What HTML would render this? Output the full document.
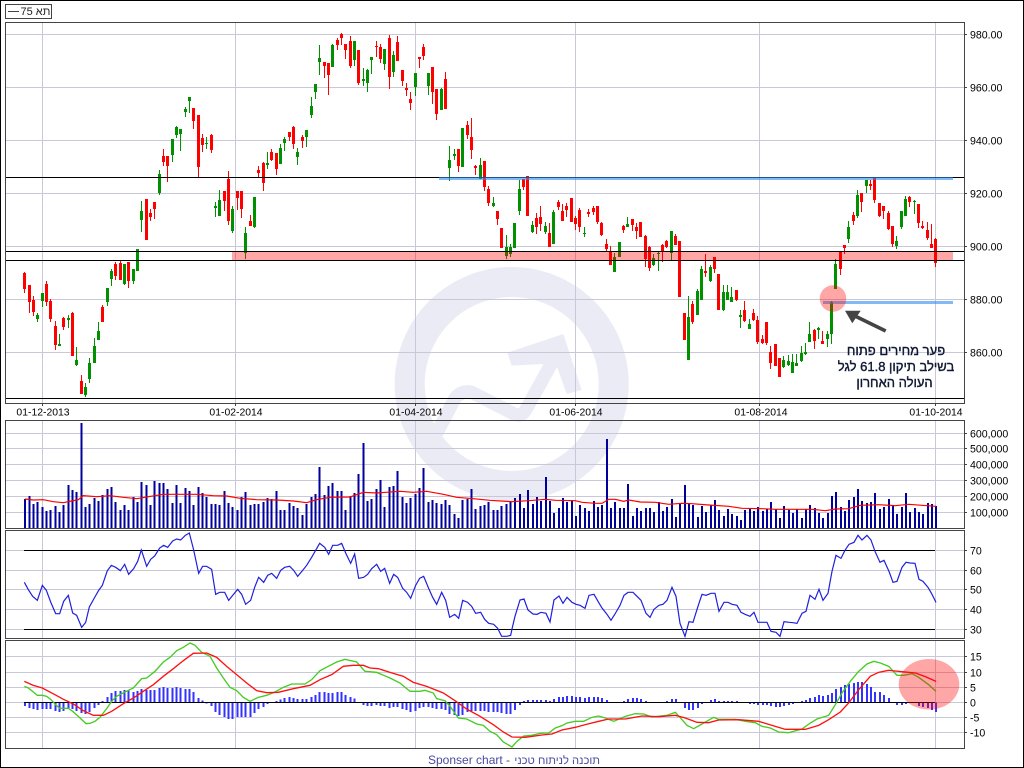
<!DOCTYPE html>
<html><head><meta charset="utf-8"><title>Chart</title>
<style>html,body{margin:0;padding:0;background:#fff;width:1024px;height:768px;overflow:hidden}svg{display:block}text{font-family:"Liberation Sans","DejaVu Sans",sans-serif}</style></head>
<body>
<svg xmlns="http://www.w3.org/2000/svg" width="1024" height="768" viewBox="0 0 1024 768">
<rect width="1024" height="768" fill="#fff"/>
<!-- watermark -->
<circle cx="511.7" cy="384" r="102" fill="none" stroke="#ebebf5" stroke-width="30"/>
<g transform="translate(390,330) scale(.33333)">
<path d="M140 310L195 205Q215 180 245 187L375 253Q395 262 410 235L490 90" fill="none" stroke="#ebebf5" stroke-width="40"/>
<path d="M352 68L520 12L575 180L530 192L497 100L365 107Z" fill="#ebebf5"/>
</g>
<!-- grid -->
<g stroke="#c8c8d8" stroke-width="1" shape-rendering="crispEdges" fill="none">
<path d="M5 34.5H964M5 87.5H964M5 140.5H964M5 193.5H964M5 246.5H964M5 299.5H964M5 352.5H964"/>
<path d="M42.5 22V403M235.5 22V403M415.5 22V403M575.5 22V403M759.5 22V403M935.5 22V403"/>
<path d="M5 433.5H964M5 448.5H964M5 464.5H964M5 480.5H964M5 496.5H964M5 512.5H964"/>
<path d="M42.5 420V528M235.5 420V528M415.5 420V528M575.5 420V528M759.5 420V528M935.5 420V528"/>
<path d="M5 550.5H964M5 570.5H964M5 589.5H964M5 609.5H964M5 629.5H964"/>
<path d="M42.5 530V638M235.5 530V638M415.5 530V638M575.5 530V638M759.5 530V638M935.5 530V638"/>
<path d="M5 656.5H964M5 672.5H964M5 687.5H964M5 702.5H964M5 717.5H964M5 732.5H964"/>
<path d="M42.5 640V748M235.5 640V748M415.5 640V748M575.5 640V748M759.5 640V748M935.5 640V748"/>
</g>
<!-- green candles -->
<g fill="none" stroke="#009000" shape-rendering="crispEdges">
<path stroke-width="1" d="M37.5 313V322M42.5 293V307M59.5 334V346M68.5 315V328M76.5 347V366M85.5 383V397M89.5 358V383M94.5 338V363M98.5 322V340M107.5 288V306M111.5 269V286M124.5 264V285M133.5 269V284M137.5 249V271M141.5 201V232M159.5 170V195M172.5 139V162M176.5 126V138M180.5 129V151M185.5 107V117M189.5 97V113M206.5 137V149M215.5 202V217M219.5 190V216M232.5 206V233M245.5 227V259M254.5 197V228M267.5 152V169M280.5 144V164M284.5 137V151M297.5 148V165M306.5 130V147M311.5 97V118M315.5 84V99M319.5 45V75M332.5 44V67M354.5 41V66M363.5 68V86M367.5 69V92M371.5 57V74M384.5 49V70M393.5 51V77M415.5 73V96M428.5 73V95M441.5 88V110M449.5 146V181M454.5 149V160M462.5 128V167M480.5 158V179M493.5 197V207M506.5 235V259M510.5 244V257M514.5 223V248M519.5 180V215M532.5 221V233M545.5 222V234M553.5 210V244M584.5 227V237M614.5 253V272M619.5 242V257M627.5 217V227M653.5 254V266M658.5 251V271M671.5 231V260M688.5 296V360M697.5 289V315M701.5 266V300M710.5 265V282M723.5 285V311M727.5 285V300M731.5 287V302M740.5 310V328M749.5 319V329M783.5 356V368M788.5 355V366M792.5 354V373M796.5 354V366M801.5 346V362M805.5 343V355M809.5 322V342M818.5 327V339M827.5 331V347M831.5 301V344M835.5 259V289M848.5 221V243M857.5 190V218M866.5 180V193M896.5 236V249M901.5 211V229M905.5 196V216M914.5 200V214"/>
<path stroke-width="3" d="M37.5 315V319M42.5 293V301M59.5 344V346M68.5 318V320M76.5 360V365M85.5 387V395M89.5 363V379M94.5 346V363M98.5 331V340M107.5 288V302M111.5 271V279M124.5 264V284M133.5 269V281M137.5 249V271M141.5 211V220M159.5 174V193M172.5 139V155M176.5 127V135M180.5 129V134M185.5 109V112M189.5 97V101M206.5 143V144M215.5 206V208M219.5 200V216M232.5 209V231M245.5 233V253M254.5 197V227M267.5 163V165M280.5 148V164M284.5 139V143M297.5 152V157M306.5 130V137M311.5 106V115M315.5 84V92M319.5 58V62M332.5 45V67M354.5 41V60M363.5 79V81M367.5 70V83M371.5 57V60M384.5 49V64M393.5 55V72M415.5 73V87M428.5 73V86M441.5 89V110M449.5 160V168M454.5 154V156M462.5 128V167M480.5 165V179M493.5 203V206M506.5 247V256M510.5 247V254M514.5 223V248M519.5 189V211M532.5 225V232M545.5 226V232M553.5 212V244M584.5 233V234M614.5 257V272M619.5 242V257M627.5 224V227M653.5 258V265M658.5 253V254M671.5 231V253M688.5 317V360M697.5 291V315M701.5 269V300M710.5 267V281M723.5 292V310M727.5 292V300M731.5 297V302M740.5 315V317M749.5 324V329M783.5 360V367M788.5 361V365M792.5 362V373M796.5 363V366M801.5 353V361M805.5 352V354M809.5 334V342M818.5 328V330M827.5 334V339M831.5 302V334M835.5 264V289M848.5 227V239M857.5 195V216M866.5 180V186M896.5 241V246M901.5 211V227M905.5 199V216M914.5 201V202"/>
</g>
<!-- red candles -->
<g fill="none" stroke="#ff0000" shape-rendering="crispEdges">
<path stroke-width="1" d="M24.5 272V293M29.5 285V313M33.5 296V316M46.5 281V306M50.5 299V322M55.5 321V350M63.5 317V330M72.5 312V356M81.5 375V394M102.5 305V322M115.5 262V280M120.5 261V280M128.5 262V288M146.5 199V240M150.5 209V221M154.5 202V219M163.5 149V166M167.5 156V182M193.5 108V129M198.5 115V177M202.5 134V152M211.5 134V153M224.5 191V211M228.5 171V225M237.5 191V210M241.5 191V218M250.5 215V226M258.5 166V177M263.5 162V191M271.5 149V161M276.5 153V175M289.5 132V141M293.5 126V149M302.5 135V148M324.5 62V78M328.5 63V95M337.5 38V50M341.5 33V45M345.5 44V59M350.5 36V68M358.5 50V85M376.5 41V57M380.5 44V63M389.5 35V89M397.5 36V61M402.5 70V86M406.5 83V96M410.5 92V110M419.5 57V68M423.5 44V60M432.5 67V104M436.5 89V120M445.5 72V109M458.5 149V172M467.5 121V139M471.5 118V159M475.5 165V175M484.5 161V191M488.5 186V206M497.5 211V225M501.5 228V248M523.5 179V190M527.5 176V216M536.5 213V234M540.5 206V231M549.5 223V247M558.5 200V210M562.5 204V221M566.5 203V217M571.5 198V222M575.5 216V230M579.5 208V232M588.5 209V217M593.5 206V215M597.5 206V224M601.5 222V236M606.5 239V251M610.5 246V265M623.5 225V233M632.5 219V231M636.5 223V239M640.5 222V237M645.5 235V267M649.5 246V271M662.5 244V262M666.5 240V248M675.5 234V245M679.5 241V297M684.5 313V340M692.5 301V324M705.5 254V277M714.5 257V273M718.5 274V310M736.5 290V301M744.5 301V322M753.5 309V321M757.5 316V344M762.5 335V344M766.5 322V345M770.5 346V369M775.5 344V366M779.5 358V377M814.5 329V349M822.5 331V344M840.5 251V275M844.5 245V254M853.5 212V225M861.5 193V212M870.5 180V190M874.5 178V203M879.5 203V217M883.5 206V219M888.5 211V230M892.5 226V247M909.5 196V207M918.5 204V228M922.5 221V229M927.5 222V240M931.5 224V248M935.5 238V267"/>
<path stroke-width="3" d="M24.5 273V289M29.5 285V302M33.5 300V312M46.5 284V302M50.5 301V319M55.5 326V345M63.5 318V327M72.5 313V356M81.5 381V394M102.5 307V322M115.5 264V276M120.5 263V280M128.5 262V281M146.5 199V240M150.5 213V217M154.5 202V209M163.5 156V162M167.5 156V166M193.5 108V121M198.5 115V167M202.5 138V145M211.5 135V150M224.5 191V201M228.5 179V221M237.5 191V198M241.5 191V209M250.5 221V226M258.5 170V173M263.5 163V183M271.5 152V160M276.5 153V169M289.5 132V137M293.5 127V144M302.5 137V141M324.5 62V66M328.5 63V75M337.5 40V45M341.5 34V38M345.5 44V50M350.5 41V66M358.5 50V83M376.5 46V47M380.5 47V59M389.5 38V77M397.5 42V61M402.5 70V81M406.5 88V90M410.5 99V103M419.5 57V59M423.5 47V56M432.5 67V92M436.5 89V114M445.5 79V109M458.5 149V166M467.5 125V135M471.5 137V150M475.5 166V168M484.5 161V187M488.5 189V203M497.5 211V219M501.5 228V248M523.5 179V187M527.5 176V216M536.5 218V227M540.5 217V224M549.5 233V247M558.5 202V207M562.5 211V221M566.5 206V210M571.5 198V222M575.5 218V224M579.5 210V227M588.5 212V214M593.5 208V212M597.5 206V222M601.5 223V235M606.5 244V249M610.5 251V265M623.5 226V230M632.5 219V225M636.5 227V231M640.5 222V237M645.5 236V259M649.5 247V268M662.5 245V252M666.5 241V247M675.5 236V245M679.5 241V297M684.5 313V340M692.5 304V322M705.5 271V273M714.5 257V269M718.5 274V310M736.5 290V300M744.5 310V321M753.5 313V320M757.5 320V342M762.5 339V343M766.5 322V343M770.5 352V363M775.5 344V366M779.5 358V377M814.5 330V341M822.5 341V344M840.5 252V269M844.5 245V248M853.5 215V221M861.5 193V202M870.5 184V186M874.5 178V200M879.5 203V216M883.5 206V211M888.5 213V229M892.5 226V244M909.5 197V202M918.5 204V223M922.5 226V228M927.5 230V238M931.5 244V248M935.5 239V263"/>
</g>
<!-- black lines main -->
<g stroke="#000" shape-rendering="crispEdges" fill="none">
<path d="M5 177.5H964M5 251.5H964M5 260.5H964M5 398.5H964"/>
</g>
<!-- band + blue -->
<rect x="232" y="252" width="721" height="8" fill="#ff0000" fill-opacity=".35" shape-rendering="crispEdges"/>
<rect x="439" y="177" width="514" height="3" fill="#2e8cf0" fill-opacity=".6" shape-rendering="crispEdges"/>
<rect x="823" y="301" width="130" height="3" fill="#2e8cf0" fill-opacity=".6" shape-rendering="crispEdges"/>
<circle cx="833" cy="298.5" r="13.3" fill="#ff0000" fill-opacity=".35"/>
<path d="M845 310.7L860.7 310.7L852.3 323.3Z" fill="#444"/>
<path d="M855 316L885.7 331" stroke="#444" stroke-width="3.6" fill="none"/>
<g font-size="13" fill="#14142a" text-anchor="middle" stroke="#102040" stroke-width=".4">
<text x="896" y="355">פער מחירים פתוח</text>
<text x="896" y="371">בשילב תיקון 61.8 לגל</text>
<text x="894.5" y="387">העולה האחרון</text>
</g>
<!-- volume -->
<g transform="translate(0,415) scale(.33333)" fill="none" stroke="#00009c" stroke-width="6" shape-rendering="crispEdges">
<path d="M75 340V252M89 340V243M101 340V267M113 340V261M128 340V276M140 340V288M152 340V285M167 340V273M179 340V291M191 340V270M206 340V210M218 340V225M230 340V231M245 340V24M257 340V276M269 340V267M284 340V249M296 340V258M308 340V240M323 340V222M335 340V216M347 340V261M362 340V285M374 340V270M386 340V285M401 340V246M413 340V261M425 340V201M440 340V210M452 340V270M464 340V198M479 340V204M491 340V204M503 340V222M518 340V264M530 340V210M542 340V264M557 340V219M569 340V228M581 340V270M596 340V216M608 340V234M620 340V246M635 340V267M647 340V267M659 340V270M674 340V228M686 340V264M698 340V276M713 340V285M725 340V246M737 340V231M752 340V270M764 340V267M776 340V267M791 340V261M803 340V249M815 340V252M830 340V228M842 340V285M854 340V285M869 340V264M881 340V273M893 340V279M908 340V300M920 340V267M935 340V246M947 340V237M959 340V156M974 340V240M986 340V213M998 340V204M1013 340V228M1025 340V228M1037 340V285M1052 340V243M1064 340V234M1076 340V177M1091 340V84M1103 340V258M1115 340V252M1130 340V222M1142 340V195M1154 340V276M1169 340V216M1181 340V213M1193 340V168M1208 340V246M1220 340V264M1232 340V249M1247 340V237M1259 340V219M1271 340V159M1286 340V261M1298 340V255M1310 340V264M1325 340V267M1337 340V255M1349 340V270M1364 340V297M1376 340V309M1388 340V255M1403 340V252M1415 340V222M1427 340V282M1442 340V273M1454 340V270M1466 340V261M1481 340V285M1493 340V285M1505 340V273M1520 340V267M1532 340V258"/>
</g>
<g transform="translate(512,415) scale(.33333)" fill="none" stroke="#00009c" stroke-width="6" shape-rendering="crispEdges">
<path d="M9 340V249M24 340V237M36 340V279M48 340V225M63 340V267M75 340V246M87 340V258M102 340V186M114 340V258M126 340V294M141 340V279M153 340V249M165 340V261M180 340V255M192 340V303M204 340V270M219 340V279M231 340V288M246 340V258M258 340V276M270 340V270M285 340V72M297 340V279M309 340V261M324 340V279M336 340V279M348 340V207M363 340V303M375 340V279M387 340V288M402 340V279M414 340V279M426 340V291M441 340V261M453 340V288M465 340V276M480 340V252M492 340V306M504 340V267M519 340V210M531 340V264M543 340V270M558 340V306M570 340V273M582 340V291M597 340V270M609 340V255M621 340V285M636 340V303M648 340V282M660 340V297M675 340V303M687 340V315M699 340V285M714 340V279M726 340V288M738 340V276M753 340V288M765 340V282M777 340V261M792 340V282M804 340V309M816 340V273M831 340V285M843 340V294M855 340V282M870 340V309M882 340V282M894 340V270M909 340V279M921 340V294M933 340V309M948 340V294M960 340V243M972 340V231M987 340V276M999 340V288M1011 340V255M1026 340V246M1038 340V222M1050 340V258M1065 340V264M1077 340V261M1089 340V234M1104 340V282M1116 340V276M1131 340V252M1143 340V273M1155 340V297M1170 340V276M1182 340V234M1194 340V291M1209 340V279M1221 340V291M1233 340V297M1248 340V264M1260 340V267M1272 340V273"/>
</g>
<g transform="translate(0,415) scale(.33333)" fill="none" stroke="#ff0000" stroke-width="3.6">
<polyline points="75,252 100,255 130,254 160,260 190,263 215,258 235,254 250,242 290,245 330,242 370,247 410,251 445,245 490,238 530,238 590,238 640,242 680,243 720,250 770,254 830,255 880,258 920,263 950,254 990,247 1050,246 1090,232 1130,234 1200,229 1240,232 1280,229 1330,238 1370,247 1420,251 1470,256 1536,260 1586,257 1636,253 1666,256 1726,257 1746,262 1786,265 1806,265 1826,253 1846,253 1871,259 1886,255 1921,261 1966,262 2006,268 2046,265 2076,266 2126,270 2186,274 2226,280 2286,281 2326,283 2376,283 2436,283 2476,287 2506,282 2546,281 2581,271 2636,269 2686,272 2726,268 2766,271 2808,274"/>
</g>
<!-- rsi -->
<path d="M24 550.5H935M24 629.5H935" stroke="#000" fill="none" shape-rendering="crispEdges"/>
<g transform="translate(0,528) scale(.33333)" fill="none" stroke="#2020dd" stroke-width="3.6">
<polyline points="73,163 85,185 98,205 112,217 127,172 139,187 152,222 167,257 179,257 191,220 205,202 218,255 230,262 245,298 257,283 268,237 283,210 296,187 307,172 322,128 334,112 347,118 361,128 374,109 386,139 401,122 413,100 424,66 440,115 452,94 464,84 479,60 491,52 503,58 518,39 530,33 542,36 556,22 568,15 581,66 596,136 608,115 620,115 635,124 647,199 659,193 674,193 686,217 698,202 713,184 725,199 737,229 752,217 764,178 776,148 791,163 803,142 815,136 830,151 842,127 854,118 869,115 881,127 893,145 908,127 920,112 935,88 947,67 959,46 974,58 986,79 998,52 1013,52 1025,46 1037,75 1052,106 1064,78 1076,151 1091,148 1103,139 1115,122 1130,109 1142,130 1154,121 1169,166 1181,139 1193,148 1208,181 1220,193 1232,211 1247,172 1259,151 1271,145 1286,181 1298,208 1310,229 1325,193 1337,217 1349,268 1364,259 1376,271 1388,217 1403,223 1415,235 1427,256 1442,253 1454,274 1466,286 1481,289 1493,301 1505,325 1520,325 1532,322 1536,303 1545,265 1560,216 1572,213 1584,246 1599,258 1611,259 1623,253 1638,256 1650,282 1662,216 1677,204 1689,226 1701,208 1716,223 1728,229 1740,232 1755,241 1767,202 1782,199 1794,220 1806,240 1821,259 1833,277 1845,258 1860,232 1872,202 1884,193 1899,193 1911,205 1923,217 1938,256 1950,268 1962,244 1977,232 1989,229 2001,217 2016,178 2028,205 2040,286 2055,325 2067,281 2079,283 2094,235 2106,199 2118,202 2133,196 2145,196 2157,250 2172,223 2184,223 2196,229 2211,232 2223,253 2235,259 2250,265 2262,253 2274,283 2286,283 2301,283 2313,310 2328,313 2340,325 2352,281 2367,283 2379,284 2391,286 2406,256 2418,250 2430,202 2445,214 2457,184 2469,217 2484,196 2496,130 2508,82 2523,91 2535,67 2547,49 2562,43 2574,22 2586,36 2601,22 2613,36 2625,70 2640,103 2652,97 2667,130 2679,163 2691,160 2706,118 2718,103 2730,105 2745,106 2757,154 2769,160 2784,178 2796,199 2808,223"/>
</g>
<!-- macd histogram -->
<g transform="translate(0,638) scale(.33333)" fill="none" stroke="#3333ff" stroke-width="6" shape-rendering="crispEdges">
<path d="M75 193V204M89 193V210M101 193V213M113 193V216M128 193V213M140 193V213M152 193V213M167 193V219M179 193V222M191 193V219M206 193V213M218 193V213M230 193V219M245 193V225M257 193V228M269 193V222M284 193V210M296 193V201M308 193V189M323 193V177M335 193V165M347 193V159M362 193V159M374 193V156M386 193V156M401 193V162M413 193V159M425 193V153M440 193V156M452 193V156M464 193V156M479 193V150M491 193V147M503 193V150M518 193V150M530 193V147M542 193V150M557 193V153M569 193V153M581 193V162M596 193V180M608 193V188M620 193V197M635 193V204M647 193V222M659 193V231M674 193V237M686 193V243M698 193V243M713 193V237M725 193V237M737 193V237M752 193V237M764 193V225M776 193V213M791 193V207M803 193V198M830 193V189M842 193V185M854 193V180M869 193V177M881 193V180M893 193V183M908 193V183M920 193V183M935 193V177M947 193V171M959 193V162M974 193V162M986 193V165M998 193V165M1013 193V162M1025 193V162M1037 193V171M1052 193V177M1064 193V181M1091 193V201M1103 193V204M1115 193V204M1130 193V201M1142 193V204M1154 193V204M1169 193V210M1181 193V207M1193 193V207M1208 193V213M1220 193V216M1232 193V222M1247 193V219M1259 193V210M1271 193V207M1286 193V207M1298 193V210M1310 193V213M1325 193V213M1337 193V216M1349 193V228M1364 193V231M1376 193V234M1388 193V231M1403 193V222M1415 193V219M1427 193V219M1442 193V219M1454 193V219M1466 193V222M1481 193V222M1493 193V222M1505 193V225M1520 193V228M1532 193V228"/>
</g>
<g transform="translate(512,638) scale(.33333)" fill="none" stroke="#3333ff" stroke-width="6" shape-rendering="crispEdges">
<path d="M9 193V216M24 193V201M36 193V189M48 193V186M63 193V186M75 193V186M87 193V186M102 193V186M114 193V189M126 193V183M141 193V177M153 193V177M165 193V174M180 193V174M192 193V177M204 193V177M219 193V180M231 193V177M246 193V177M258 193V177M270 193V180M285 193V186M336 193V189M348 193V183M363 193V180M375 193V180M387 193V183M402 193V189M465 193V189M480 193V183M492 193V183M519 193V210M531 193V216M543 193V216M558 193V210M570 193V198M597 193V186M609 193V183M621 193V189M636 193V189M648 193V189M660 193V189M675 193V189M714 193V198M726 193V198M738 193V201M753 193V201M765 193V201M777 193V204M792 193V207M804 193V207M816 193V204M831 193V201M843 193V198M870 193V189M882 193V186M894 193V180M909 193V177M921 193V171M933 193V174M948 193V171M960 193V165M972 193V153M987 193V147M999 193V141M1011 193V138M1026 193V135M1038 193V132M1050 193V132M1065 193V138M1077 193V147M1089 193V162M1104 193V162M1116 193V171M1131 193V180M1155 193V201M1170 193V201M1182 193V198M1221 193V204M1233 193V207M1248 193V210M1260 193V216M1272 193V222"/>
</g>
<path d="M24 702.5H935" stroke="#000" fill="none" shape-rendering="crispEdges"/>
<g transform="translate(0,638) scale(.33333)" fill="none" stroke-width="4">
<polyline stroke="#44cc22" points="73,145 85,150 100,162 112,172 127,172 140,175 152,184 167,200 179,211 205,211 218,220 235,235 258,257 270,256 285,250 300,238 320,212 335,190 350,175 375,162 400,150 425,122 440,120 465,100 490,72 510,58 530,38 550,28 570,15 585,22 605,43 630,55 650,90 670,120 690,148 710,158 730,178 750,190 775,178 800,172 825,162 850,148 875,138 915,138 935,125 960,98 985,85 1010,72 1035,64 1070,72 1095,100 1130,103 1170,120 1200,135 1230,160 1260,160 1275,157 1300,165 1310,182 1335,188 1350,205 1375,240 1400,243 1430,258 1450,262 1470,280 1490,290 1510,312 1536,327 1551,310 1571,294 1596,292 1621,286 1646,285 1666,270 1686,263 1701,255 1726,250 1751,250 1776,238 1796,234 1816,240 1841,250 1876,235 1906,227 1931,228 1956,237 2001,232 2026,223 2046,245 2061,262 2081,272 2106,258 2141,238 2156,244 2206,244 2236,250 2266,254 2286,265 2311,270 2336,282 2366,284 2406,273 2431,255 2451,243 2486,232 2506,200 2526,165 2551,130 2576,100 2601,78 2621,70 2641,75 2666,85 2691,112 2711,112 2736,107 2756,118 2786,140 2808,160"/>
<polyline stroke="#ff1010" points="73,130 100,142 127,150 165,170 190,184 220,198 250,218 280,232 310,232 335,220 370,197 400,180 430,160 460,140 490,115 520,92 550,68 580,46 620,45 650,58 680,85 710,110 740,135 770,158 800,164 835,163 880,152 930,142 960,125 995,110 1030,85 1060,82 1090,82 1110,90 1135,92 1170,103 1210,115 1240,133 1280,145 1330,165 1365,188 1400,213 1440,235 1480,260 1510,282 1536,297 1576,298 1626,291 1656,288 1686,276 1726,268 1756,260 1796,250 1826,243 1876,243 1926,234 1976,236 2026,232 2056,240 2091,253 2126,254 2156,246 2216,245 2276,250 2326,265 2356,274 2416,274 2456,262 2486,245 2521,222 2546,195 2576,155 2611,115 2636,103 2666,97 2706,101 2746,105 2776,116 2808,130"/>
</g>
<ellipse cx="929" cy="684.3" rx="30.3" ry="25.3" fill="#ff0000" fill-opacity=".35"/>
<!-- panel borders -->
<g fill="none" stroke="#444" shape-rendering="crispEdges">
<rect x="5.5" y="22.5" width="959" height="381"/>
<rect x="5.5" y="420.5" width="959" height="108"/>
<rect x="5.5" y="530.5" width="959" height="108"/>
<rect x="5.5" y="640.5" width="959" height="108"/>
<rect x="5.5" y="4.5" width="46" height="14"/>
<path d="M8 11.5H19"/>
<path d="M964 34.5h3M964 87.5h3M964 140.5h3M964 193.5h3M964 246.5h3M964 299.5h3M964 352.5h3M964 433.5h3M964 448.5h3M964 464.5h3M964 480.5h3M964 496.5h3M964 512.5h3M964 550.5h3M964 570.5h3M964 589.5h3M964 609.5h3M964 629.5h3M964 656.5h3M964 672.5h3M964 687.5h3M964 702.5h3M964 717.5h3M964 732.5h3"/>
<path d="M42.5 403v3M235.5 403v3M415.5 403v3M575.5 403v3M759.5 403v3M935.5 403v3"/>
</g>
<rect x=".5" y=".5" width="1023" height="767" fill="none" stroke="#000" shape-rendering="crispEdges"/>
<!-- labels -->
<text x="20.5" y="15" font-size="11" fill="#222">75 תא</text>
<g font-size="10.6" fill="#000">
<text x="970" y="38.5">980.00</text><text x="970" y="91.5">960.00</text><text x="970" y="144.5">940.00</text><text x="970" y="197.5">920.00</text><text x="970" y="250.5">900.00</text><text x="970" y="303.5">880.00</text><text x="970" y="356.5">860.00</text>
<text x="970" y="437.5">600,000</text><text x="970" y="452.5">500,000</text><text x="970" y="468.5">400,000</text><text x="970" y="484.5">300,000</text><text x="970" y="500.5">200,000</text><text x="970" y="516.5">100,000</text>
<text x="970" y="554.5">70</text><text x="970" y="574.5">60</text><text x="970" y="593.5">50</text><text x="970" y="613.5">40</text><text x="970" y="633.5">30</text>
<text x="970" y="660.5">15</text><text x="970" y="676.5">10</text><text x="970" y="691.5">5</text><text x="970" y="706.5">0</text><text x="970" y="721.5">-5</text><text x="970" y="736.5">-10</text>
</g>
<g font-size="10.4" fill="#000" text-anchor="middle">
<text x="43" y="415.5">01-12-2013</text><text x="236" y="415.5">01-02-2014</text><text x="416" y="415.5">01-04-2014</text><text x="576" y="415.5">01-06-2014</text><text x="761" y="415.5">01-08-2014</text><text x="936" y="415.5">01-10-2014</text>
</g>
<text x="428" y="764" font-size="12" fill="#4a4aa0">Sponser chart -</text>
<text x="600" y="764" font-size="11.2" fill="#4a4aa0" text-anchor="end">תוכנה לניתוח טכני</text>
</svg>
</body></html>
